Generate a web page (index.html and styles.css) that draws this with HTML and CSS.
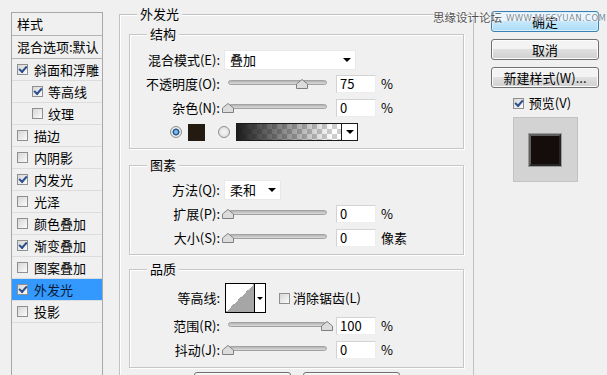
FILE: index.html
```html
<!DOCTYPE html>
<html lang="zh-CN">
<head>
  <meta charset="UTF-8" />
  <title>图层样式 - 外发光</title>
  <link rel="stylesheet" href="styles.css">
</head>
<body>

  <div class="dialog">

    <aside class="styles-list">
      <div class="list-head">样式</div>
      <div class="list-head">混合选项:默认</div>
      <div class="list-item"><span class="cb on"></span>斜面和浮雕</div>
      <div class="list-item sub"><span class="cb on"></span>等高线</div>
      <div class="list-item sub"><span class="cb"></span>纹理</div>
      <div class="list-item"><span class="cb"></span>描边</div>
      <div class="list-item"><span class="cb"></span>内阴影</div>
      <div class="list-item"><span class="cb on"></span>内发光</div>
      <div class="list-item"><span class="cb"></span>光泽</div>
      <div class="list-item"><span class="cb"></span>颜色叠加</div>
      <div class="list-item"><span class="cb on"></span>渐变叠加</div>
      <div class="list-item"><span class="cb"></span>图案叠加</div>
      <div class="list-item active"><span class="cb on"></span>外发光</div>
      <div class="list-item"><span class="cb"></span>投影</div>
    </aside>

    <main class="outer">
      <div class="legend">外发光</div>

      <section class="group structure">
        <div class="legend">结构</div>
        <div class="rows">
          <div class="row">
            <span class="lbl">混合模式(E):</span>
            <span class="select wide">叠加<i class="arrow"></i></span>
          </div>
          <div class="row">
            <span class="lbl">不透明度(O):</span>
            <span class="slider"><span class="track"></span><span class="knob" style="left: 75%"><svg width="12" height="10" viewBox="0 0 12 10"><polygon points="6,0.5 11.5,5 11.5,9.5 0.5,9.5 0.5,5" fill="#dcdcdc" stroke="#808080"/></svg></span></span>
            <span class="num">75</span><span class="unit">%</span>
          </div>
          <div class="row">
            <span class="lbl">杂色(N):</span>
            <span class="slider"><span class="track"></span><span class="knob" style="left: 0%"><svg width="12" height="10" viewBox="0 0 12 10"><polygon points="6,0.5 11.5,5 11.5,9.5 0.5,9.5 0.5,5" fill="#dcdcdc" stroke="#808080"/></svg></span></span>
            <span class="num">0</span><span class="unit">%</span>
          </div>
          <div class="row color-row">
            <span class="radio on"></span>
            <span class="swatch"></span>
            <span class="radio"></span>
            <span class="gradient-pick"><span class="gradient"></span><span class="drop"><i class="arrow"></i></span></span>
          </div>
        </div>
      </section>

      <section class="group elements">
        <div class="legend">图素</div>
        <div class="rows">
          <div class="row">
            <span class="lbl">方法(Q):</span>
            <span class="select narrow">柔和<i class="arrow"></i></span>
          </div>
          <div class="row">
            <span class="lbl">扩展(P):</span>
            <span class="slider"><span class="track"></span><span class="knob" style="left: 0%"><svg width="12" height="10" viewBox="0 0 12 10"><polygon points="6,0.5 11.5,5 11.5,9.5 0.5,9.5 0.5,5" fill="#dcdcdc" stroke="#808080"/></svg></span></span>
            <span class="num">0</span><span class="unit">%</span>
          </div>
          <div class="row">
            <span class="lbl">大小(S):</span>
            <span class="slider"><span class="track"></span><span class="knob" style="left: 0%"><svg width="12" height="10" viewBox="0 0 12 10"><polygon points="6,0.5 11.5,5 11.5,9.5 0.5,9.5 0.5,5" fill="#dcdcdc" stroke="#808080"/></svg></span></span>
            <span class="num">0</span><span class="unit">像素</span>
          </div>
        </div>
      </section>

      <section class="group quality">
        <div class="legend">品质</div>
        <div class="rows">
          <div class="row tall">
            <span class="lbl">等高线:</span>
            <span class="contour"><span class="curve"></span><span class="drop"><i class="arrow small"></i></span></span>
            <span class="cb antialias"></span>
            <span class="check-text">消除锯齿(L)</span>
          </div>
          <div class="row">
            <span class="lbl">范围(R):</span>
            <span class="slider"><span class="track"></span><span class="knob" style="left: 100%"><svg width="12" height="10" viewBox="0 0 12 10"><polygon points="6,0.5 11.5,5 11.5,9.5 0.5,9.5 0.5,5" fill="#dcdcdc" stroke="#808080"/></svg></span></span>
            <span class="num">100</span><span class="unit">%</span>
          </div>
          <div class="row">
            <span class="lbl">抖动(J):</span>
            <span class="slider"><span class="track"></span><span class="knob" style="left: 0%"><svg width="12" height="10" viewBox="0 0 12 10"><polygon points="6,0.5 11.5,5 11.5,9.5 0.5,9.5 0.5,5" fill="#dcdcdc" stroke="#808080"/></svg></span></span>
            <span class="num">0</span><span class="unit">%</span>
          </div>
        </div>
      </section>

      <!-- only the top edges of these two buttons are in view -->
      <div class="bottom-btns">
        <button class="btn" aria-label="设置为默认值"></button>
        <button class="btn" aria-label="复位为默认值"></button>
      </div>
    </main>

    <aside class="actions">
      <button class="btn default">确定</button>
      <button class="btn">取消</button>
      <button class="btn">新建样式(W)...</button>
      <div class="preview-check"><span class="cb on"></span>预览(V)</div>
      <div class="preview"><span class="preview-swatch"></span></div>
    </aside>

    <div class="watermark">
      <span class="wm-name">思缘设计论坛</span>
      <span class="wm-url">WWW.MISSYUAN.COM</span>
    </div>

  </div>

</body>
</html>
```

FILE: styles.css
```css
* {
  box-sizing: border-box;
}

body {
  margin: 0;
  background-color: #f0f0f0;
  font-family: "Noto Sans CJK SC", "Liberation Sans", sans-serif;
  font-size: 13px;
  line-height: 16px;
  color: #000;
  overflow: hidden;
}

.dialog {
  position: relative;
  display: flex;
  align-items: flex-start;
  height: 375px;
  overflow: hidden;
}

/* left list of styles */

.styles-list {
  flex: none;
  width: 92px;
  height: 400px;
  margin: 12px 0 0 11px;
  border: 1px solid #a8a8a8;
  white-space: nowrap;
  overflow: hidden;
}

.list-head {
  height: 23px;
  line-height: 22px;
  padding-left: 5px;
  border-bottom: 1px solid #b4b4b4;
}

.list-item {
  display: flex;
  align-items: center;
  gap: 6px;
  height: 22px;
  padding-left: 5px;
  border-bottom: 1px solid #dcdcdc;
}

.list-item.sub {
  padding-left: 20px;
  gap: 5px;
}

.list-item.active {
  background-color: #3399ff;
  color: #0c1a33;
}

/* checkboxes and radios */

.cb {
  position: relative;
  flex: none;
  width: 11px;
  height: 11px;
  border: 1px solid #8e8f8f;
  background: linear-gradient(135deg, #d6d6d6, #fbfbfb);
}

.cb.on::after {
  content: "";
  position: absolute;
  left: 1px;
  top: 1px;
  width: 6px;
  height: 3px;
  border-left: 2px solid #2d4f8e;
  border-bottom: 2px solid #2d4f8e;
  transform: rotate(-48deg);
}

.radio {
  flex: none;
  width: 12px;
  height: 12px;
  border: 1px solid #8e8f8f;
  border-radius: 50%;
  background: radial-gradient(circle, #f6f6f6, #d9d9d9);
}

.radio.on {
  background: radial-gradient(circle, #7fb9e6 0 1.5px, #1f5a94 2.5px 3.2px, #e8e8e8 3.8px);
}

/* centre panel */

.outer {
  flex: none;
  width: 355px;
  height: 400px;
  margin: 14px 0 0 16px;
  border: 1px solid #c2c2c2;
  border-bottom: none;
  box-shadow: inset 1px 1px 0 #fff;
}

.legend {
  width: fit-content;
  height: 16px;
  margin: -9px 0 0 17px;
  padding: 0 3px;
  background-color: #f0f0f0;
}

.group {
  margin: 12px 9px 0;
  padding-bottom: 5px;
  border: 1px solid #c6c6c6;
  box-shadow: inset 1px 1px 0 #fff, 1px 1px 0 #fff;
}

.group.elements {
  margin-top: 16px;
}

.group.quality {
  margin-top: 14px;
  padding-bottom: 6px;
}

.rows {
  display: flex;
  flex-direction: column;
  gap: 2px;
  padding-top: 7px;
}

.elements .rows,
.quality .rows {
  padding-top: 6px;
}

.row {
  display: flex;
  align-items: center;
  height: 22px;
}

.row.tall {
  height: 30px;
}

.lbl {
  flex: none;
  width: 90px;
  text-align: right;
  white-space: nowrap;
}

.select {
  display: flex;
  align-items: center;
  justify-content: space-between;
  height: 20px;
  margin-left: 4px;
  padding: 0 4px 0 5px;
  background-color: #fff;
  border: 1px solid #e8e8e8;
}

.select.wide {
  width: 132px;
}

.select.narrow {
  width: 57px;
}

.arrow {
  display: block;
  width: 0;
  height: 0;
  border-left: 4px solid transparent;
  border-right: 4px solid transparent;
  border-top: 4px solid #000;
}

.arrow.small {
  border-left-width: 3px;
  border-right-width: 3px;
  border-top-width: 3px;
}

.slider {
  position: relative;
  flex: none;
  width: 99px;
  height: 10px;
  margin-left: 8px;
}

.track {
  display: block;
  height: 5px;
  margin-top: 1px;
  border-radius: 3px;
  border: 1px solid #a2a2a2;
  background: linear-gradient(#b4b4b4, #dadada);
}

.knob {
  position: absolute;
  top: 0;
  margin-left: -6px;
  width: 12px;
  height: 10px;
}

.knob svg {
  display: block;
}

.num {
  flex: none;
  width: 40px;
  height: 18px;
  margin-left: 9px;
  padding-left: 3px;
  line-height: 16px;
  background-color: #fff;
  border: 1px solid;
  border-color: #d2d2d2 #ededed #ededed #d2d2d2;
}

.unit {
  margin-left: 5px;
}

.color-row {
  padding-left: 40px;
}

.swatch {
  flex: none;
  width: 17px;
  height: 17px;
  margin-left: 6px;
  background-color: #231b12;
}

.color-row .radio + .gradient-pick {
  margin-left: 6px;
}

.swatch + .radio {
  margin-left: 13px;
}

.gradient-pick {
  display: flex;
  width: 122px;
  height: 18px;
  border: 1px solid #1a1a1a;
}

.gradient {
  flex: 1;
  background-image:
    linear-gradient(to right, rgba(28, 28, 28, 1), rgba(28, 28, 28, 0) 92%),
    conic-gradient(#cdcdcd 25%, #fff 0 50%, #cdcdcd 0 75%, #fff 0);
  background-size: 100% 100%, 10px 10px;
}

.drop {
  display: flex;
  align-items: center;
  justify-content: center;
  flex: none;
  width: 16px;
  border-left: 1px solid #1a1a1a;
  background-color: #fff;
}

.contour {
  display: flex;
  flex: none;
  width: 41px;
  height: 30px;
  margin-left: 5px;
  border: 1px solid #000;
}

.curve {
  flex: 1;
  background: linear-gradient(to top left, #a6a6a6 50%, #fff 50%);
}

.contour .drop {
  width: 11px;
  border-left-color: #000;
}

.cb.antialias {
  margin-left: 13px;
}

.check-text {
  margin-left: 3px;
  white-space: nowrap;
}

.bottom-btns {
  display: flex;
  justify-content: center;
  gap: 12px;
  margin-top: 4px;
}

.bottom-btns .btn {
  width: 97px;
}

/* right column */

.actions {
  flex: none;
  display: flex;
  flex-direction: column;
  align-items: center;
  width: 108px;
  margin: 11px 0 0 17px;
}

.btn {
  width: 108px;
  height: 21px;
  margin: 0 0 7px;
  padding: 0;
  font: inherit;
  color: #000;
  text-align: center;
  border: 1px solid #707070;
  border-radius: 3px;
  background: linear-gradient(#f3f3f3 45%, #e0e0e0 50%, #d0d0d0);
  box-shadow: inset 0 0 0 1px #fbfbfb;
}

.btn.default {
  border-color: #3c7fb1;
  background: linear-gradient(#eaf6fd 45%, #c6e8fb 50%, #a9dbf6);
  box-shadow: inset 0 0 0 1px #d8f0fd;
}

.preview-check {
  display: flex;
  align-items: center;
  gap: 5px;
  height: 16px;
  margin-left: -6px;
}

.preview {
  display: flex;
  align-items: center;
  justify-content: center;
  width: 65px;
  height: 65px;
  margin-top: 6px;
  border: 1px solid #c2c2c2;
  background-color: #d3d3d3;
}

.preview-swatch {
  width: 32px;
  height: 32px;
  background-color: #150d0b;
  border: 2px solid;
  border-color: #5e5e5e #262626 #262626 #5e5e5e;
  box-shadow: 0 0 0 1px #9a9a9a;
}

/* forum watermark over the top right corner */

.watermark {
  position: absolute;
  top: 7px;
  left: 433px;
  display: flex;
  align-items: center;
  gap: 4px;
  white-space: nowrap;
}

.wm-name {
  font-size: 11.5px;
  color: #505050;
  text-shadow: 0 0 2px #fff, 0 0 2px #fff;
}

.wm-url {
  margin-top: 3px;
  font-family: "DejaVu Sans", sans-serif;
  font-size: 8.5px;
  letter-spacing: 0.4px;
  color: #7d8a96;
  text-shadow: 0 0 1px #fff, 0 0 2px #fff;
}
```
